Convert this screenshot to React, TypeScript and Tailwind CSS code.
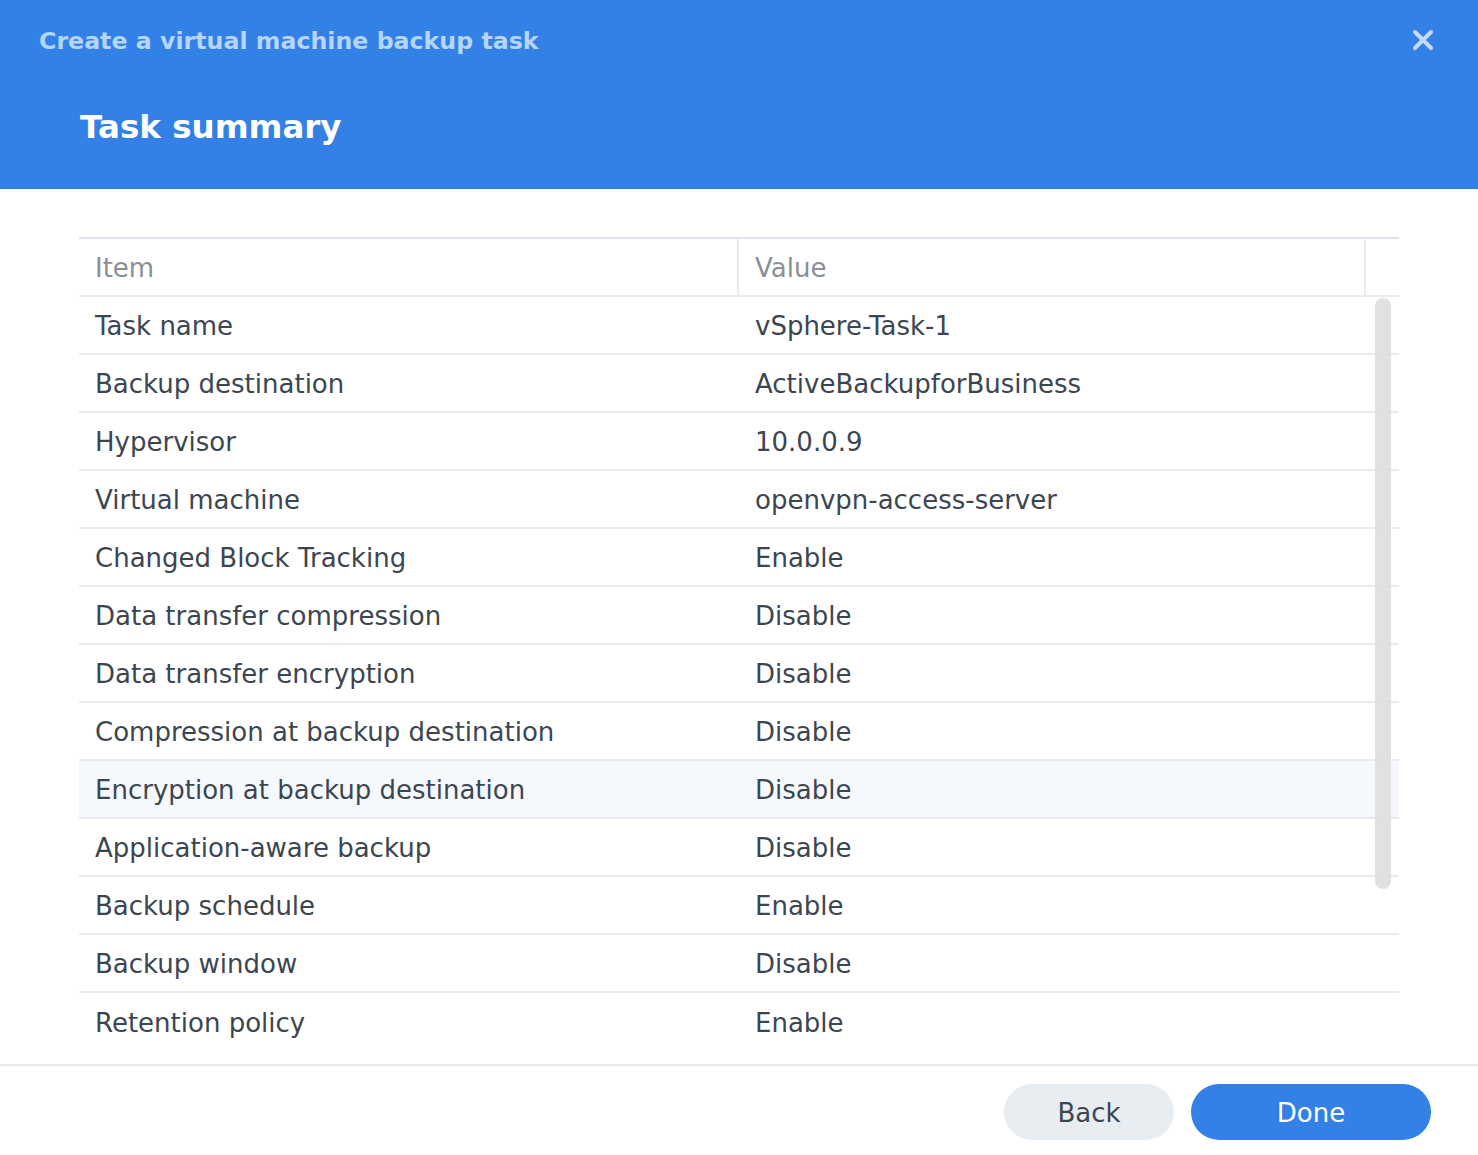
import React from "react";

const rows: [string, string][] = [
  ["Task name", "vSphere-Task-1"],
  ["Backup destination", "ActiveBackupforBusiness"],
  ["Hypervisor", "10.0.0.9"],
  ["Virtual machine", "openvpn-access-server"],
  ["Changed Block Tracking", "Enable"],
  ["Data transfer compression", "Disable"],
  ["Data transfer encryption", "Disable"],
  ["Compression at backup destination", "Disable"],
  ["Encryption at backup destination", "Disable"],
  ["Application-aware backup", "Disable"],
  ["Backup schedule", "Enable"],
  ["Backup window", "Disable"],
  ["Retention policy", "Enable"],
];

export default function App() {
  return (
    <div
      className="w-[1478px] h-[1155px] bg-white flex flex-col overflow-hidden"
      style={{ fontFamily: '"DejaVu Sans", Verdana, sans-serif' }}
    >
      <div className="h-[189px] bg-[#3380e6] relative shrink-0">
        <div className="pl-[39px] pt-[26px] text-[23.7px] font-bold text-[#b5d5fb] leading-[30px]">
          Create a virtual machine backup task
        </div>
        <div className="pl-[80px] pt-[49px] text-[32.5px] font-bold text-white leading-[44px]">
          Task summary
        </div>
        <svg
          className="absolute left-[1411px] top-[28px]"
          width="24"
          height="24"
          viewBox="0 0 24 24"
        >
          <path
            d="M4 4 L20 20 M20 4 L4 20"
            stroke="#c2dcfb"
            strokeWidth="4"
            strokeLinecap="round"
          />
        </svg>
      </div>

      <div className="flex-1 pt-[48px] px-[79px]">
        <div className="relative border-t-2 border-[#dde3ea] w-[1320px]">
          <div className="flex h-[58px] border-b-2 border-[#e8ecf0] text-[#8a8f94] text-[26px]">
            <div className="w-[660px] border-r-2 border-[#e8ecf0] pl-[16px] pt-[2px] flex items-center">
              Item
            </div>
            <div className="w-[627px] border-r-2 border-[#e8ecf0] pl-[16px] pt-[2px] flex items-center">
              Value
            </div>
            <div className="flex-1" />
          </div>
          {rows.map(([k, v], i) => (
            <div
              key={k}
              className={`flex h-[58px] text-[26px] text-[#3c4650] pt-[3px] ${
                i < rows.length - 1 ? "border-b-2 border-[#e8ecf0]" : ""
              } ${i === 8 ? "bg-[#f5f9fe]" : ""}`}
            >
              <div className="w-[660px] pl-[16px] flex items-center">{k}</div>
              <div className="flex-1 pl-[16px] flex items-center">{v}</div>
            </div>
          ))}
          <div className="absolute left-[1296px] top-[59px] w-[16px] h-[591px] rounded-full bg-[#dedede] opacity-90" />
        </div>
      </div>

      <div className="h-[91px] shrink-0 border-t-2 border-[#e5e9ee] flex justify-end items-start pt-[18px] pr-[47px] gap-[17px]">
        <button className="w-[170px] h-[56px] rounded-full bg-[#e8edf2] text-[#3c4650] text-[26px] pt-[2px]">
          Back
        </button>
        <button className="w-[240px] h-[56px] rounded-full bg-[#3380e6] text-white text-[26px] pt-[2px]">
          Done
        </button>
      </div>
    </div>
  );
}
